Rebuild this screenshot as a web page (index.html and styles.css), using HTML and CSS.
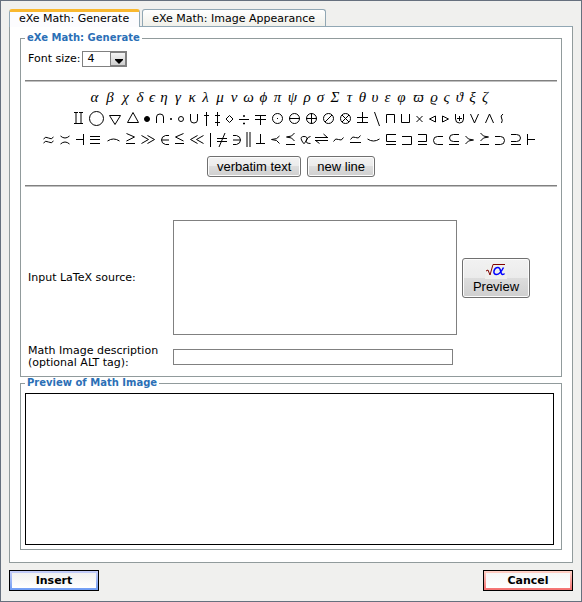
FILE: index.html
```html
<!DOCTYPE html>
<html lang="en">
<head>
<meta charset="utf-8">
<title>eXe Math</title>
<link rel="stylesheet" href="styles.css">
</head>
<body>
<form class="dialog">
  <nav class="tabs">
    <a class="tab current" href="#generate">eXe Math: Generate</a>
    <a class="tab" href="#appearance">eXe Math: Image Appearance</a>
  </nav>
  <main class="panel" id="generate">
    <fieldset class="group">
      <legend>eXe Math: Generate</legend>
      <div class="size-row">
        <label for="size">Font size:</label>
        <span class="select-box">
          <select id="size"><option>3</option><option selected>4</option><option>5</option></select>
          <svg class="arrow" viewBox="0 0 14 12" aria-hidden="true"><path d="M4 6h8v1l-4 4-4-4z"/></svg>
        </span>
      </div>
      <hr>
      <div class="symbols" id="symbols"></div>
      <div class="commands">
        <button type="button" class="push">verbatim text</button>
        <button type="button" class="push">new line</button>
      </div>
      <hr>
      <div class="fields">
        <label for="source">Input LaTeX source:</label>
        <div class="source-row">
          <textarea id="source"></textarea>
          <button type="button" class="push preview">
            <svg class="root" viewBox="0 0 22 15" aria-hidden="true">
              <path class="paper" d="M0 0h22v15H0z"/>
              <path class="radical" d="M1 7l2-1 2 5 3-10.500h12"/>
              <path class="alpha" d="M18.500 3.500c-2 4-4 7-7 7-2 0-3-1.500-2.500-3.500C9.500 5 11 3.500 13 3.500c3.500 0 2 7 4.500 7q1.500 0 2-1"/>
            </svg>
            Preview
          </button>
        </div>
        <label for="alt">Math Image description<br>(optional ALT tag):</label>
        <input id="alt" type="text">
      </div>
    </fieldset>
    <fieldset class="group result">
      <legend>Preview of Math Image</legend>
      <div class="canvas"></div>
    </fieldset>
  </main>
  <footer class="actions">
    <button type="button" class="action insert">Insert</button>
    <button type="button" class="action cancel">Cancel</button>
  </footer>
</form>
<script src="symbols.js"></script>
</body>
</html>
```
FILE: styles.css
```css
* { box-sizing: border-box; }
html { height: 100%; }
body {
  min-height: 100%;
  margin: 0;
  border: 1px solid #66707e;
  background: #f0f0ee;
  color: #000;
  font: 11px/12px "DejaVu Sans", Verdana, sans-serif;
}
.dialog { padding: 8px; }
.tabs { display: flex; gap: 2px; }
.tab {
  height: 17px;
  padding: 3px 10px 0 9px;
  border: 1px solid #91a7b4;
  border-bottom: 0;
  border-radius: 3px 3px 0 0;
  background: linear-gradient(#fff, #f0f0ea);
  color: #000;
  text-decoration: none;
  white-space: nowrap;
}
.tab.current {
  position: relative;
  height: 18px;
  margin-bottom: -1px;
  padding-top: 1px;
  border-top: 3px solid #ffc73c;
  border-top-color: #f9b82f;
  background: #fcfcfe;
}
.panel {
  padding: 5px 10px 12px;
  border: 1px solid #919b9c;
  border-top-color: #91a7b4;
  background: #fff;
}
.group {
  min-width: 0;
  margin: 0;
  padding: 0 4px 4px;
  border: 1px solid #919b9c;
}
.group legend {
  padding: 0 2px;
  color: #2b6fb6;
  font-size: 10px;
  font-weight: bold;
}
.result {
  padding-top: 4px;
  padding-right: 7px;
}
.size-row {
  display: flex;
  align-items: center;
  gap: 2px;
  height: 36px;
  padding: 0 3px 6px;
}
.select-box { position: relative; }
.select-box select {
  display: block;
  width: 45px;
  height: 16px;
  padding: 0 4px;
  border: 1px solid #808080;
  border-radius: 0;
  background: #fff;
  font: inherit;
  appearance: none;
}
.arrow {
  position: absolute;
  top: 1px;
  right: 1px;
  width: 16px;
  height: 14px;
  border: 1px solid #808080;
  background: linear-gradient(#f4f4f4, #cfcfcf);
  pointer-events: none;
}
hr {
  height: 2px;
  margin: 0;
  border: 0;
  border-top: 1px solid #808080;
  background: #c0c0c0;
}
.symbols {
  display: flex;
  flex-direction: column;
  gap: 5px;
  padding: 8px 4px 0 0;
}
.symbol-row {
  display: flex;
  justify-content: center;
  gap: 6px;
}
.symbol {
  display: flex;
  flex: none;
  justify-content: center;
  height: 16px;
  padding: 0;
  border: 0;
  background: none;
  color: #000;
  font: italic 15px/15px "Liberation Serif", "DejaVu Serif", serif;
  cursor: pointer;
}
.symbol svg {
  width: 100%;
  height: 16px;
  overflow: visible;
  fill: none;
  stroke: #000;
  stroke-width: 1;
}
.symbol .solid { fill: #000; }
.commands {
  display: flex;
  justify-content: center;
  gap: 6px;
  padding: 8px 0;
}
.push {
  height: 21px;
  padding: 0 9px;
  border: 1px solid #707070;
  border-radius: 3px;
  background: linear-gradient(#f2f2f2, #ebebeb 50%, #dddddd 50%, #cfcfcf);
  box-shadow: inset 0 0 0 1px #fcfcfc;
  color: #000;
  font: 13px/16px "Liberation Sans", Arial, sans-serif;
}
.fields {
  display: grid;
  grid-template-columns: 145px 1fr;
  align-items: center;
  row-gap: 10px;
  padding: 33px 0 3px 3px;
}
.source-row { display: flex; align-items: center; gap: 5px; }
.source-row textarea {
  width: 284px;
  height: 115px;
  border: 1px solid #808080;
  resize: none;
}
.preview {
  display: flex;
  flex-direction: column;
  align-items: center;
  width: 68px;
  height: 40px;
  padding-top: 5px;
}
.root { flex: none; width: 22px; height: 15px; fill: none; }
.paper { fill: #f0f0ee; }
.radical { stroke: #800000; stroke-width: 1; }
.alpha { stroke: #00f; stroke-width: 1.5; }
.fields input {
  width: 280px;
  height: 16px;
  padding: 0 2px;
  border: 1px solid #808080;
  font: inherit;
}
.canvas { height: 152px; border: 1px solid #000; }
.actions {
  display: flex;
  justify-content: space-between;
  padding-top: 7px;
}
.action {
  width: 90px;
  height: 21px;
  padding: 2px;
  border: 1px solid #000;
  color: #000;
  font: bold 11px/12px "DejaVu Sans", Verdana, sans-serif;
}
.insert {
  background:
    linear-gradient(#f0f0f0, #fff) content-box,
    linear-gradient(#c6cdf8, #6f9cf4);
}
.cancel {
  background:
    linear-gradient(#f6f6f6, #fff) content-box,
    linear-gradient(#ffd2c8, #f47070);
}
```
FILE: symbols.js
```js
// Greek letters: [character, cell width]
const letters = [
  ["α", 10], ["β", 9], ["χ", 10], ["δ", 7], ["ϵ", 5], ["η", 7], ["γ", 9], ["κ", 7],
  ["λ", 8], ["μ", 9], ["ν", 7], ["ω", 10], ["ϕ", 8], ["π", 8], ["ψ", 10], ["ρ", 7],
  ["σ", 8], ["Σ", 9], ["τ", 8], ["θ", 6], ["υ", 7], ["ε", 6], ["φ", 10], ["ϖ", 12],
  ["ϱ", 7], ["ς", 6], ["ϑ", 8], ["ξ", 6], ["ζ", 7]
];

// Operators: [LaTeX name, icon width, stroke path, filled]
const ring = "M.5 7.500a5 5 0 1 0 10 0a5 5 0 1 0-10 0";
const operators = [
  ["amalg", 9, "M0 1.500h4M5 1.500h4M2 1v11M7 1v11M0 12.500h9"],
  ["bigcirc", 14, "M.5 7.500a7 7 0 1 0 14 0a7 7 0 1 0-14 0"],
  ["bigtriangledown", 12, "M.5 4.500h11L6 13.500z"],
  ["bigtriangleup", 11, "M.5 11.500h11L6 1.500z"],
  ["bullet", 6, "M.5 8a2.500 2.500 0 1 0 5 0a2.500 2.500 0 1 0-5 0", true],
  ["cap", 8, "M.5 12V6q0-3 3.500-3t3.500 3v6"],
  ["cdot", 2, "M.5 7.500h1v1h-1z", true],
  ["circ", 6, "M.5 8a2.500 2.500 0 1 0 5 0a2.500 2.500 0 1 0-5 0"],
  ["cup", 8, "M.5 3v6q0 3 3.500 3t3.500-3V3"],
  ["dagger", 5, "M2.500 1v14M0 4.500h5"],
  ["ddagger", 5, "M2.500 1v14M0 4.500h5M0 11.500h5"],
  ["diamond", 7, "M3.500 4.500L7 8 3.500 11.500 0 8z"],
  ["div", 10, "M0 8.500h10M4.500 4.500h1v1h-1zM4.500 12h1v1h-1z"],
  ["mp", 11, "M0 4.500h11M0 8.500h11M5.500 4v10"],
  ["odot", 11, ring + "M5 7.500h1"],
  ["ominus", 11, ring + "M0 7.500h11"],
  ["oplus", 11, ring + "M0 7.500h11M5.500 2v11"],
  ["oslash", 11, ring + "M2 11l7-7"],
  ["otimes", 11, ring + "M2 11l7-7M2 4l7 7"],
  ["pm", 11, "M0 6.500h11M0 11.500h11M5.500 1v10"],
  ["setminus", 6, "M.5 1l5 14"],
  ["sqcap", 9, "M.5 12V3.500h8V12"],
  ["sqcup", 9, "M.5 3v8.500h8V3"],
  ["times", 7, "M.5 5l6 6M6.500 5l-6 6"],
  ["triangleleft", 7, "M6.500 5v6L.5 8z"],
  ["triangleright", 7, "M.5 5v6l6-3z"],
  ["uplus", 9, "M.5 3v5q0 4 4 4t4-4V3M4.500 5v5M2 7.500h5"],
  ["vee", 9, "M.5 3l4 9 4-9"],
  ["wedge", 9, "M.5 12l4-9 4 9"],
  ["wr", 4, "M3 3q-3 2-1.500 4t0 5"]
];
const relations = [
  ["approx", 11, "M.5 7q2-3 5-1t5-1M.5 11q2-3 5-1t5-1"],
  ["asymp", 10, "M.5 4q4.500 4 9 0M.5 12q4.500-4 9 0"],
  ["dashv", 8, "M7.500 2v11M0 7.500h7"],
  ["equiv", 11, "M0 4.500h10M0 7.500h10M0 11.500h10"],
  ["frown", 13, "M.5 9q6-4 12 0"],
  ["geq", 9, "M.5 1.500l8 3.500-8 4M0 11.500h9"],
  ["gg", 14, "M.5 3.500l7 4-7 4M6.500 3.500l7 4-7 4"],
  ["in", 8, "M8 3.500H4.500q-4 1-4 4.500t4 4.500H8M.5 8H8"],
  ["leq", 9, "M8.500 1.500l-8 3.500 8 4M0 11.500h9"],
  ["ll", 14, "M7.500 3.500l-7 4 7 4M13.500 3.500l-7 4 7 4"],
  ["mid", 1, "M.5 1v14"],
  ["neq", 10, "M0 6.500h10M0 9.500h10M8 1L2 15"],
  ["ni", 8, "M0 3.500h3.500q4 1 4 4.500t-4 4.500H0M7.500 8H0"],
  ["parallel", 3, "M0 0v15M3 0v15"],
  ["perp", 9, "M4.500 2v10M0 11.500h9"],
  ["prec", 9, "M8.500 4q-2 3.500-8 3.500 6 0 8 4"],
  ["preceq", 9, "M8.500 1q-2 4-8 4 6 0 8 4M0 12.500h9"],
  ["propto", 9, "M9.500 4.500Q7 4.500 5.500 8T3 11.500.5 8 3 4.500 5.500 8t4 3.500"],
  ["rightleftharpoons", 11, "M-1 5.500h13M7.500 2l4 3.500M-1 8.500h13M-.5 8.500l4 3"],
  ["sim", 11, "M.5 9.500q2-4 5-2t5-2"],
  ["simeq", 11, "M.5 7.500q2-4 5-2t5-2M0 10.500h11"],
  ["smile", 13, "M.5 7q6 4 12 0"],
  ["sqsubseteq", 10, "M10 2.500H.5v7H10M0 12.500h10"],
  ["sqsupset", 10, "M0 4.500h9.500v8H0"],
  ["sqsupseteq", 9, "M0 2.500h8.500v7H0M0 12.500h9"],
  ["subset", 10, "M10 4.500H4.500q-4 0-4 4t4 4H10"],
  ["subseteq", 10, "M10 2.500H4.500q-4 0-4 3.500t4 3.500H10M0 12.500h10"],
  ["succ", 9, "M.5 4q2 4 8 4-6 0-8 4"],
  ["succeq", 9, "M.5 1q2 4 8 4-6 0-8 4M0 12.500h9"],
  ["supset", 10, "M0 4.500h5.500q4 0 4 4t-4 4H0"],
  ["supseteq", 10, "M0 2.500h5.500q4 0 4 3.500t-4 3.500H0M0 12.500h10"],
  ["vdash", 8, "M.5 2v11M1 7.500h7"]
];

const letter = ([text, width]) =>
  `<button type="button" class="symbol" style="width:${width}px">${text}</button>`;

const icon = ([name, width, path, solid]) =>
  `<button type="button" class="symbol" style="width:${width}px" aria-label="${name}">` +
  `<svg viewBox="0 0 ${width} 16"><path${solid ? ' class="solid"' : ""} d="${path}"/></svg></button>`;

const row = cells => `<div class="symbol-row">${cells.join("")}</div>`;

document.getElementById("symbols").innerHTML =
  row(letters.map(letter)) + row(operators.map(icon)) + row(relations.map(icon));
```
